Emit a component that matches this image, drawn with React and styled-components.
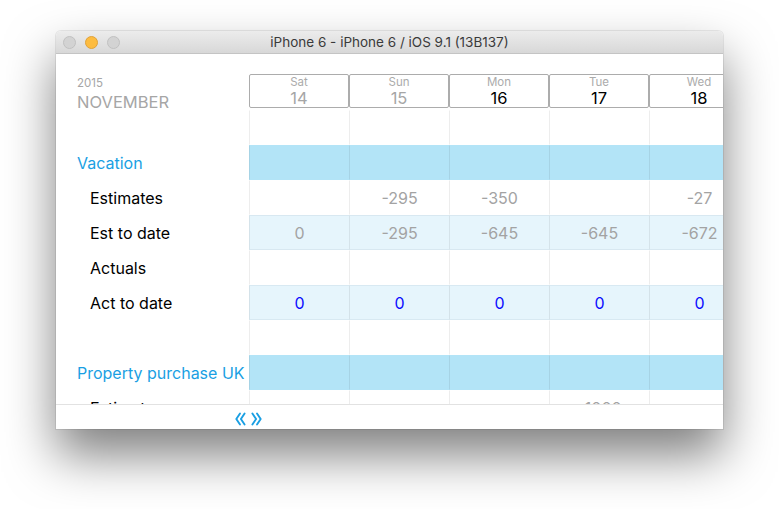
import styled, { createGlobalStyle } from "styled-components";

const GlobalStyle = createGlobalStyle`
  html, body {
    margin: 0;
    padding: 0;
    background: #ffffff;
  }
  body {
    font-family: Inter, "Liberation Sans", sans-serif;
  }
`;

const days = [
  { name: "Sat", num: 14, weekend: true },
  { name: "Sun", num: 15, weekend: true },
  { name: "Mon", num: 16 },
  { name: "Tue", num: 17 },
  { name: "Wed", num: 18 },
];

const empty = ["", "", "", "", ""];

const rows = [
  { type: "spacer" },
  { type: "group", label: "Vacation" },
  { type: "line", label: "Estimates", values: ["", "-295", "-350", "", "-27"] },
  { type: "line", label: "Est to date", tint: true, values: ["0", "-295", "-645", "-645", "-672"] },
  { type: "line", label: "Actuals", values: empty },
  { type: "line", label: "Act to date", tint: true, actual: true, values: ["0", "0", "0", "0", "0"] },
  { type: "spacer" },
  { type: "group", label: "Property purchase UK" },
  { type: "line", label: "Estimates", values: ["", "", "", "-1000", ""] },
];

const DoubleChevron = ({ dir }) => (
  <svg width="11" height="14" viewBox="0 0 11 14" fill="none">
    <g
      stroke="#1a9fe3"
      strokeWidth="1.9"
      strokeLinecap="round"
      strokeLinejoin="round"
      transform={dir === "right" ? "translate(11 0) scale(-1 1)" : undefined}
    >
      <path d="M5 1.5 L1.3 7 L5 12.5" />
      <path d="M9.6 1.5 L5.9 7 L9.6 12.5" />
    </g>
  </svg>
);

const App = () => {
  return (
    <>
      <GlobalStyle />
      <Desk>
        <Window>
          <TitleBar>
            <Lights>
              <Light />
              <Light $color="#fdbc40" $edge="#dfa23a" />
              <Light />
            </Lights>
            <Title>iPhone 6 - iPhone 6 / iOS 9.1 (13B137)</Title>
            <span />
          </TitleBar>

          <Screen>
            <Header>
              <MonthBox>
                <Year>2015</Year>
                <Month>NOVEMBER</Month>
              </MonthBox>
              {days.map((d) => (
                <DayHead key={d.num}>
                  <DayName>{d.name}</DayName>
                  <DayNum $weekend={d.weekend}>{d.num}</DayNum>
                </DayHead>
              ))}
            </Header>

            <Grid>
              {rows.map((r, i) => (
                <Row key={i}>
                  <Label $group={r.type === "group"}>{r.label}</Label>
                  {(r.values || empty).map((v, j) => (
                    <Cell
                      key={j}
                      $kind={r.type === "group" ? "group" : r.tint ? "tint" : "plain"}
                      $actual={r.actual}
                    >
                      {v}
                    </Cell>
                  ))}
                </Row>
              ))}
            </Grid>

            <Footer>
              <DoubleChevron dir="left" />
              <DoubleChevron dir="right" />
            </Footer>
          </Screen>
        </Window>
      </Desk>
    </>
  );
};

const Desk = styled.div`
  padding: 31px 0 0 56px;
  height: 509px;
  box-sizing: border-box;
  overflow: hidden;
`;

const Window = styled.div`
  width: 667px;
  border-radius: 5px 5px 0 0;
  background: #ffffff;
  box-shadow: 0 26px 50px rgba(0, 0, 0, 0.5), 0 0 0 1px rgba(0, 0, 0, 0.08);
  overflow: hidden;
`;

const TitleBar = styled.div`
  height: 23px;
  box-sizing: border-box;
  display: grid;
  grid-template-columns: 1fr auto 1fr;
  align-items: center;
  background: linear-gradient(#ececec, #d8d8d8);
  border-bottom: 1px solid #c4c4c4;
`;

const Lights = styled.div`
  display: flex;
  gap: 9px;
  padding-left: 7px;
`;

const Light = styled.div`
  width: 11px;
  height: 11px;
  border-radius: 50%;
  background: ${(p) => p.$color || "#d3d3d3"};
  border: 0.5px solid ${(p) => p.$edge || "#c0c0c0"};
`;

const Title = styled.div`
  font-family: Inter, "Liberation Sans", sans-serif;
  font-size: 13.5px;
  color: #3a3a3a;
`;

const Screen = styled.div`
  height: 375px;
  display: flex;
  flex-direction: column;
  overflow: hidden;
`;

const Header = styled.div`
  height: 56px;
  flex-shrink: 0;
  display: flex;
  align-items: flex-start;
`;

const MonthBox = styled.div`
  width: 193px;
  flex-shrink: 0;
  box-sizing: border-box;
  padding: 22px 0 0 21px;
  color: #a6a6a6;
`;

const Year = styled.div`
  font-size: 11.5px;
  line-height: 14px;
`;

const Month = styled.div`
  font-size: 16.5px;
  line-height: 20px;
  margin-top: 2px;
`;

const DayHead = styled.div`
  width: 100px;
  height: 34px;
  flex-shrink: 0;
  margin-top: 20px;
  box-sizing: border-box;
  border: 1px solid #acacac;
  border-radius: 2px;
  display: flex;
  flex-direction: column;
  align-items: center;
`;

const DayName = styled.div`
  font-size: 11.5px;
  line-height: 13px;
  margin-top: 1px;
  color: #ababab;
`;

const DayNum = styled.div`
  font-size: 16.5px;
  line-height: 19px;
  color: ${(p) => (p.$weekend ? "#a6a6a6" : "#000000")};
`;

const Grid = styled.div`
  flex: 1;
  overflow: hidden;
`;

const Row = styled.div`
  height: 35px;
  display: flex;
`;

const Label = styled.div`
  width: 193px;
  flex-shrink: 0;
  box-sizing: border-box;
  padding-left: ${(p) => (p.$group ? 21 : 34)}px;
  display: flex;
  align-items: center;
  white-space: nowrap;
  font-size: 16px;
  color: ${(p) => (p.$group ? "#1a9fe3" : "#000000")};
`;

const cellBg = {
  plain: "transparent",
  tint: "#e6f5fc",
  group: "#b3e4f7",
};

const Cell = styled.div`
  width: 100px;
  flex-shrink: 0;
  box-sizing: border-box;
  border-left: 1px solid rgba(0, 0, 0, 0.07);
  border-top: 1px solid ${(p) => (p.$kind === "tint" ? "rgba(0, 40, 80, 0.06)" : "transparent")};
  border-bottom: 1px solid ${(p) => (p.$kind === "tint" ? "rgba(0, 40, 80, 0.06)" : "transparent")};
  background: ${(p) => cellBg[p.$kind]};
  display: flex;
  align-items: center;
  justify-content: center;
  font-size: 16px;
  color: ${(p) => (p.$actual ? "#0c0cff" : "#a3a3a3")};
`;

const Footer = styled.div`
  height: 25px;
  flex-shrink: 0;
  box-sizing: border-box;
  border-top: 1px solid #e2e2e2;
  display: flex;
  align-items: center;
  gap: 5px;
  padding: 4px 0 0 179px;
`;

export default App;
